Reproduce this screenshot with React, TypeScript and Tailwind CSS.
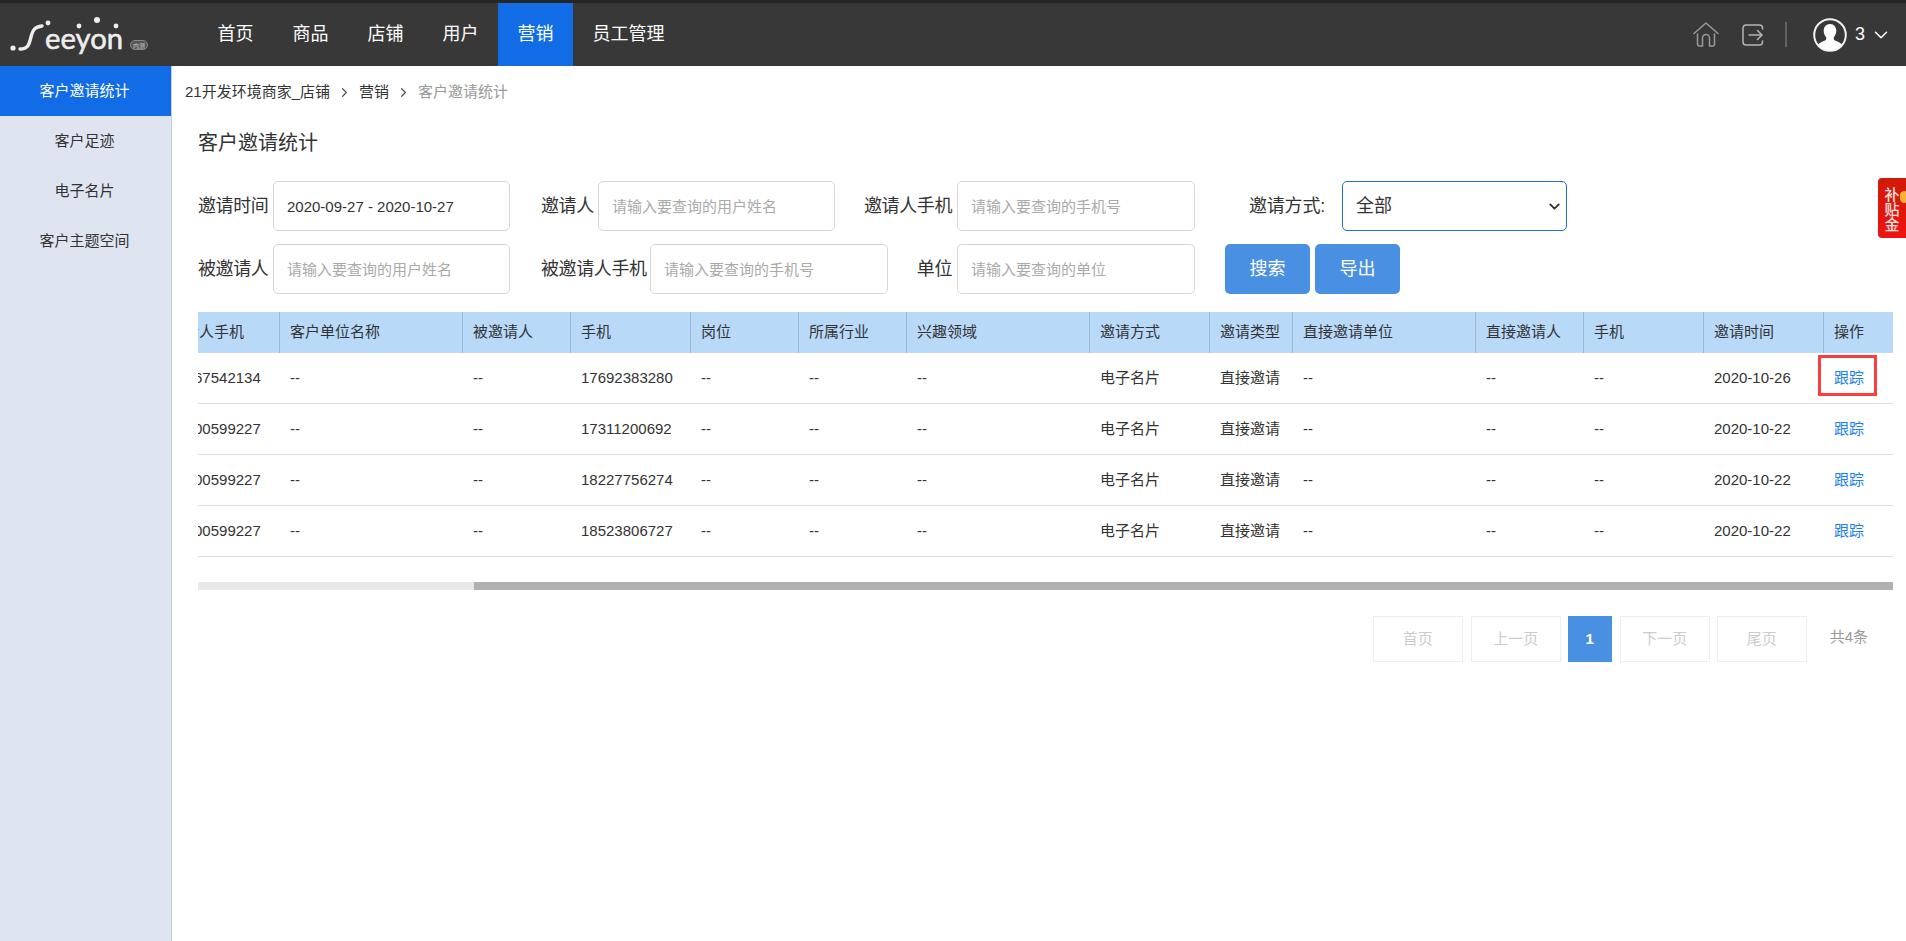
import { useEffect, useRef } from "react";
import { ChevronDown, ChevronRight } from "lucide-react";

const navItems = ["首页", "商品", "店铺", "用户", "营销", "员工管理"];
const sideItems = ["客户邀请统计", "客户足迹", "电子名片", "客户主题空间"];

const columns = [
  { title: "邀请人单位名称", width: 183 },
  { title: "邀请人", width: 108 },
  { title: "邀请人手机", width: 121 },
  { title: "客户单位名称", width: 183 },
  { title: "被邀请人", width: 108 },
  { title: "手机", width: 120 },
  { title: "岗位", width: 108 },
  { title: "所属行业", width: 108 },
  { title: "兴趣领域", width: 183 },
  { title: "邀请方式", width: 120 },
  { title: "邀请类型", width: 83 },
  { title: "直接邀请单位", width: 183 },
  { title: "直接邀请人", width: 108 },
  { title: "手机", width: 120 },
  { title: "邀请时间", width: 120 },
  { title: "操作", width: 70 },
];

const rows = [
  { inviterPhone: "13567542134", phone: "17692383280", date: "2020-10-26" },
  { inviterPhone: "18900599227", phone: "17311200692", date: "2020-10-22" },
  { inviterPhone: "18900599227", phone: "18227756274", date: "2020-10-22" },
  { inviterPhone: "18900599227", phone: "18523806727", date: "2020-10-22" },
];

function Logo() {
  return (
    <svg width="172" height="63" viewBox="0 0 172 63" className="shrink-0">
      <circle cx="13" cy="45" r="2.6" fill="#eee" />
      <circle cx="48" cy="20" r="2.4" fill="#eee" />
      <circle cx="79" cy="23" r="2.4" fill="#eee" />
      <circle cx="97" cy="17" r="3" fill="#eee" />
      <circle cx="116" cy="23" r="2.4" fill="#eee" />
      <path d="M20 46c8 0 9-4 11-12s4-10 11-11" fill="none" stroke="#eee" strokeWidth="3.4" strokeLinecap="round" />
      <text
        x="45"
        y="46"
        fontFamily="Lato, sans-serif"
        fontSize="28"
        fill="#eee"
        stroke="#eee"
        strokeWidth="0.5"
        textLength="78"
        lengthAdjust="spacingAndGlyphs"
      >
        eeyon
      </text>
      <rect x="130.5" y="37.5" width="17" height="9" rx="4.5" fill="#555" stroke="#888" />
      <text x="139" y="44.5" fontSize="6" textAnchor="middle" fill="#ccc">
        内测
      </text>
    </svg>
  );
}

function Header() {
  return (
    <div className="flex h-[63px] items-stretch bg-[#383838] text-white">
      <div className="w-[198px] shrink-0">
        <Logo />
      </div>
      <div className="flex flex-1">
        {navItems.map((item) => (
          <div
            key={item}
            className={`flex items-center px-[19.5px] text-[18px] ${item === "营销" ? "bg-[#116ce6]" : ""}`}
          >
            {item}
          </div>
        ))}
      </div>
      <div className="flex items-center pr-[14px]">
        <svg width="26" height="25" viewBox="0 0 26 25" fill="none" stroke="#9a9a9a" strokeWidth="1.5" className="mr-[23px]">
          <path d="M1 11.5 13 1l12 10.5" strokeLinecap="round" strokeLinejoin="round" />
          <path d="M4.5 11.5V22a2 2 0 0 0 2 2h3V16a3.5 3.5 0 0 1 7 0v8h3a2 2 0 0 0 2-2V11.5" strokeLinejoin="round" />
        </svg>
        <svg width="22" height="22" viewBox="0 0 22 22" fill="none" stroke="#b4b4b4" strokeWidth="1.5" strokeLinecap="round" strokeLinejoin="round" className="mr-[21px]">
          <path d="M20.5 5V4a3 3 0 0 0-3-3H4a3 3 0 0 0-3 3v14a3 3 0 0 0 3 3h13.500a3 3 0 0 0 3-3v-1" />
          <path d="M7 11h13M15.500 6.500 20 11l-4.500 4.500" />
        </svg>
        <div className="mr-[26px] h-[25px] w-[2px] bg-[#626262]" />
        <svg width="34" height="34" viewBox="0 0 34 34" className="mr-[8px]">
          <circle cx="17" cy="17" r="15.800" fill="#383838" stroke="#f2f2f2" strokeWidth="2" />
          <path
            d="M17 6c-4 0-6.300 3-6.300 6.800 0 2.800 1.100 5 2.500 6.500.3 1.500 0 2.600-1.200 3.300-2.300 1.200-5.700 1.900-6.800 4.200A15 15 0 0 0 17 32.500a15 15 0 0 0 11.800-5.700c-1.100-2.300-4.500-3-6.800-4.200-1.200-.7-1.500-1.800-1.200-3.300 1.400-1.500 2.500-3.700 2.500-6.500C23.300 9 21 6 17 6Z"
            fill="#fff"
          />
        </svg>
        <span className="mr-[5px] text-[18px]">3</span>
        <ChevronDown size={22} strokeWidth={1.7} className="text-white" />
      </div>
    </div>
  );
}

function Sidebar() {
  return (
    <div className="w-[172px] shrink-0 border-r border-[#c3cddd] bg-[#dfe5f0] text-[15px] text-[#333]">
      {sideItems.map((item, i) => (
        <div
          key={item}
          className={`flex h-[50px] items-center justify-center pr-[2px] ${i === 0 ? "bg-[#116ce6] text-white" : ""}`}
        >
          {item}
        </div>
      ))}
    </div>
  );
}

function Field({
  label,
  labelWidth,
  inputWidth,
  placeholder,
  value,
}: {
  label: string;
  labelWidth: string;
  inputWidth: string;
  placeholder?: string;
  value?: string;
}) {
  return (
    <div className="flex items-center">
      <label className={`${labelWidth} shrink-0 whitespace-nowrap pr-[5px] text-right text-[18px] tracking-[-0.4px] text-[#333]`}>{label}</label>
      <input
        className={`${inputWidth} h-[50px] rounded-[5px] border border-[#d6d6d6] bg-white pl-[13px] text-[15px] text-[#333] outline-none placeholder:text-[#aaa]`}
        placeholder={placeholder}
        defaultValue={value}
      />
    </div>
  );
}

function SearchForm() {
  return (
    <div className="flex flex-col gap-[13px]">
      <div className="flex items-center">
        <Field label="邀请时间" labelWidth="w-[75px]" inputWidth="w-[237px]" value="2020-09-27 - 2020-10-27" />
        <div className="ml-[31px]">
          <Field label="邀请人" labelWidth="w-[57px]" inputWidth="w-[237px]" placeholder="请输入要查询的用户姓名" />
        </div>
        <div className="ml-[29px]">
          <Field label="邀请人手机" labelWidth="w-[93px]" inputWidth="w-[238px]" placeholder="请输入要查询的手机号" />
        </div>
        <label className="ml-[54px] w-[93px] shrink-0 text-[18px] tracking-[-0.2px] text-[#333]">邀请方式:</label>
        <div className="relative">
          <select className="h-[50px] w-[225px] appearance-none rounded-[5px] border border-[#1f6fe0] bg-white pl-[13px] text-[18px] text-[#333] outline-none">
            <option>全部</option>
            <option>电子名片</option>
          </select>
          <ChevronDown size={17} strokeWidth={2.6} className="pointer-events-none absolute right-[4px] top-[17px] text-[#333]" />
        </div>
      </div>
      <div className="flex items-center">
        <Field label="被邀请人" labelWidth="w-[75px]" inputWidth="w-[237px]" placeholder="请输入要查询的用户姓名" />
        <div className="ml-[31px]">
          <Field label="被邀请人手机" labelWidth="w-[109px]" inputWidth="w-[238px]" placeholder="请输入要查询的手机号" />
        </div>
        <Field label="单位" labelWidth="w-[69px]" inputWidth="w-[238px]" placeholder="请输入要查询的单位" />
        <button className="ml-[30px] h-[50px] w-[85px] rounded-[5px] bg-[#4a90e2] text-[18px] text-white">搜索</button>
        <button className="ml-[5px] h-[50px] w-[85px] rounded-[5px] bg-[#4a90e2] text-[18px] text-white">导出</button>
      </div>
    </div>
  );
}

function Cell({ children }: { children: React.ReactNode }) {
  return <td className="h-[51px] border-b border-[#dedede] px-[10px] text-[15px] text-[#333]">{children}</td>;
}

function InviteTable() {
  const scrollRef = useRef<HTMLDivElement>(null);

  // the reference is scrolled a bit to the right
  useEffect(() => {
    if (scrollRef.current) scrollRef.current.scrollLeft = 330;
  }, []);

  return (
    <div>
      <div ref={scrollRef} className="overflow-hidden">
        <table className="w-[2026px] table-fixed border-separate border-spacing-0 whitespace-nowrap">
          <colgroup>
            {columns.map((c, i) => (
              <col key={i} style={{ width: c.width }} />
            ))}
          </colgroup>
          <thead>
            <tr className="h-[41px] bg-[#b9d9f9] text-left text-[15px] font-normal text-[#333]">
              {columns.map((c, i) => (
                <th key={i} className="border-r border-[#9fb6d4] px-[10px] font-normal last:border-r-0">
                  {c.title}
                </th>
              ))}
            </tr>
          </thead>
          <tbody>
            {rows.map((row, i) => (
              <tr key={i}>
                <Cell>--</Cell>
                <Cell>--</Cell>
                <Cell>{row.inviterPhone}</Cell>
                <Cell>--</Cell>
                <Cell>--</Cell>
                <Cell>{row.phone}</Cell>
                <Cell>--</Cell>
                <Cell>--</Cell>
                <Cell>--</Cell>
                <Cell>电子名片</Cell>
                <Cell>直接邀请</Cell>
                <Cell>--</Cell>
                <Cell>--</Cell>
                <Cell>--</Cell>
                <Cell>{row.date}</Cell>
                <td className="relative h-[51px] border-b border-[#dedede] px-[10px] text-[15px] text-[#1a7ff0]">
                  跟踪
                  {i === 0 && (
                    <div className="absolute left-[-6px] top-[2px] h-[41px] w-[59px] border-[3px] border-[#ff3b3b]" />
                  )}
                </td>
              </tr>
            ))}
          </tbody>
        </table>
      </div>
      <div className="mt-[25px] h-[8px] bg-[#e8e8e8] pl-[276px]">
        <div className="h-full bg-[#b0b0b0]" />
      </div>
    </div>
  );
}

function Pagination() {
  const pageBtn = "flex h-[46px] w-[90px] items-center justify-center border border-[#eeeeee] text-[15px] text-[#cccccc]";
  return (
    <div className="mt-[26px] flex items-start justify-end pr-[25px]">
      <div className={pageBtn}>首页</div>
      <div className={`${pageBtn} ml-[8px]`}>上一页</div>
      <div className="ml-[7px] flex h-[46px] w-[44px] items-center justify-center bg-[#4a90e2] text-[15px] font-bold text-white">1</div>
      <div className={`${pageBtn} ml-[8px]`}>下一页</div>
      <div className={`${pageBtn} ml-[7px]`}>尾页</div>
      <div className="ml-[23px] mt-[11px] text-[15px] leading-[20px] text-[#999]">共4条</div>
    </div>
  );
}

export default function App() {
  return (
    <div
      className="relative flex h-[941px] flex-col overflow-hidden bg-white"
      style={{ fontFamily: '"Liberation Sans", "Noto Sans CJK SC", sans-serif' }}
    >
      <div className="h-[3px] bg-[#262626]" />
      <Header />
      <div className="flex flex-1">
        <Sidebar />
        <div className="min-w-0 flex-1 pl-[13px] pr-[13px]">
          <div className="flex h-[52px] items-center text-[15px] text-[#333]">
            <span>21开发环境商家_店铺</span>
            <ChevronRight size={15} className="mx-[7px] text-[#555]" />
            <span>营销</span>
            <ChevronRight size={15} className="mx-[7px] text-[#555]" />
            <span className="text-[#999]">客户邀请统计</span>
          </div>
          <div className="pl-[13px]">
            <div className="flex h-[50px] items-center text-[20px] text-[#333]">客户邀请统计</div>
            <div className="mt-[13px]">
              <SearchForm />
            </div>
            <div className="mt-[18px]">
              <InviteTable />
            </div>
            <Pagination />
          </div>
        </div>
      </div>
      {/* floating subsidy tab */}
      <div className="absolute right-0 top-[178px] flex h-[60px] w-[28px] flex-col items-center justify-center overflow-hidden rounded-l-[4px] bg-gradient-to-b from-[#d01a06] to-[#f01212] pt-[3px] text-[15px] font-medium leading-[15px] text-[#fbe5e0]">
        <span>补</span>
        <span>贴</span>
        <span>金</span>
        <div className="absolute right-[-3px] top-[13px] h-[12px] w-[9px] rounded-full bg-[#f9b233]" />
      </div>
    </div>
  );
}
